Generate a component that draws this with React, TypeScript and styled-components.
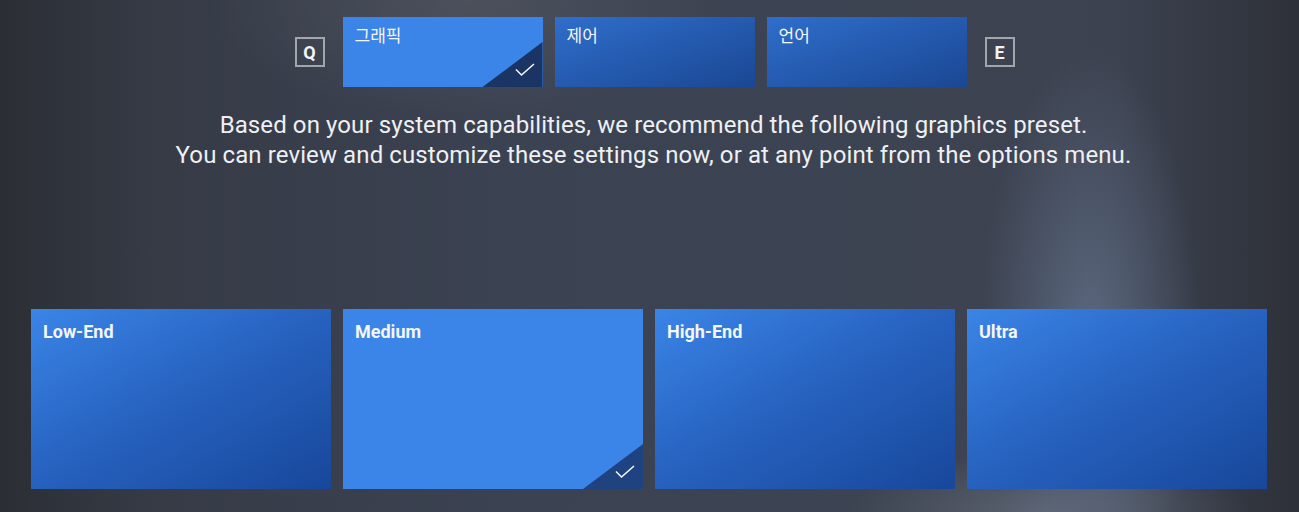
import * as React from 'react'
import styled, { createGlobalStyle } from 'styled-components'

const GlobalStyle = createGlobalStyle`
  html, body {
    margin: 0;
    padding: 0;
    background: #2f333b;
  }
  * {
    box-sizing: border-box;
  }
`

const Screen = styled.div`
  width: 1299px;
  height: 512px;
  overflow: hidden;
  display: flex;
  flex-direction: column;
  font-family: Roboto, "Noto Sans CJK KR", sans-serif;
  color: #eef0f3;
  background:
    radial-gradient(ellipse 110px 290px at 1090px 340px, rgba(96, 110, 134, 0.85), rgba(96, 110, 134, 0) 100%),
    radial-gradient(ellipse 200px 60px at 1050px 512px, rgba(100, 108, 122, 0.8), rgba(100, 108, 122, 0) 100%),
    radial-gradient(ellipse 260px 120px at 470px 0px, rgba(80, 84, 94, 0.8), rgba(80, 84, 94, 0) 100%),
    linear-gradient(90deg, #2b2e34 0%, #363b46 12%, #3b4252 40%, #3c4351 70%, #3c4250 86%, #2e3139 100%);
`

const TabRow = styled.div`
  display: flex;
  align-items: center;
  justify-content: center;
  padding: 17px 0 0 10px;
  gap: 12px;
`

const KeyHint = styled.div<{ side: 'left' | 'right' }>`
  width: 30px;
  height: 30px;
  border: 2px solid #a3a6ab;
  display: flex;
  align-items: center;
  justify-content: center;
  font-size: 18px;
  font-weight: 700;
  color: #f2f3f5;
  margin-${p => (p.side === 'left' ? 'right' : 'left')}: 6px;
`

const Tab = styled.div<{ selected?: boolean }>`
  position: relative;
  width: 200px;
  height: 70px;
  padding: 6px 12px;
  font-family: "Noto Sans CJK KR", Roboto, sans-serif;
  font-size: 17px;
  line-height: 24px;
  color: #f4f6f9;
  background: ${p => (p.selected ? '#3b84e8' : 'linear-gradient(160deg, #2f6ecb 0%, #1a4793 100%)')};
  overflow: hidden;
`

const Message = styled.div`
  margin-top: 23px;
  padding-left: 8px;
  text-align: center;
  font-size: 24px;
  line-height: 30px;
  letter-spacing: 0.1px;
  color: #eef0f3;
`

const CardRow = styled.div`
  display: flex;
  gap: 12px;
  margin-top: 139px;
  padding-left: 31px;
`

const Card = styled.div<{ selected?: boolean }>`
  position: relative;
  width: 300px;
  height: 180px;
  padding: 13px 12px;
  font-size: 18px;
  line-height: 20px;
  font-weight: 700;
  color: #f4f6f9;
  background: ${p => (p.selected ? '#3b84e8' : 'linear-gradient(150deg, #3a85e7 0%, #2864c2 45%, #17479a 100%)')};
  overflow: hidden;
`

const Corner = styled.div<{ tone: string }>`
  position: absolute;
  right: 0;
  bottom: 0;
  width: 60px;
  height: 45px;
  background: ${p => p.tone};
  clip-path: polygon(100% 0, 100% 100%, 0 100%);
`

const Check = styled.svg`
  position: absolute;
  right: 7px;
  bottom: 10px;
  width: 22px;
  height: 16px;
`

const SelectedMark = ({ tone }: { tone: string }) => (
  <Corner tone={tone}>
    <Check viewBox="0 0 22 16">
      <path d="M2 8.5 L7.5 14 L20 3" fill="none" stroke="#f4f6f9" strokeWidth="1.6" />
    </Check>
  </Corner>
)

const tabs = ['그래픽', '제어', '언어']
const presets = ['Low-End', 'Medium', 'High-End', 'Ultra']

export default function App() {
  const activeTab = 0
  const activePreset = 1

  return (
    <>
      <GlobalStyle />
      <Screen>
        <TabRow>
          <KeyHint side="left">Q</KeyHint>
          {tabs.map((tab, i) => (
            <Tab key={tab} selected={i === activeTab}>
              {tab}
              {i === activeTab && <SelectedMark tone="#1a3564" />}
            </Tab>
          ))}
          <KeyHint side="right">E</KeyHint>
        </TabRow>
        <Message>
          Based on your system capabilities, we recommend the following graphics preset.
          <br />
          You can review and customize these settings now, or at any point from the options menu.
        </Message>
        <CardRow>
          {presets.map((preset, i) => (
            <Card key={preset} selected={i === activePreset}>
              {preset}
              {i === activePreset && <SelectedMark tone="#1e4380" />}
            </Card>
          ))}
        </CardRow>
      </Screen>
    </>
  )
}
